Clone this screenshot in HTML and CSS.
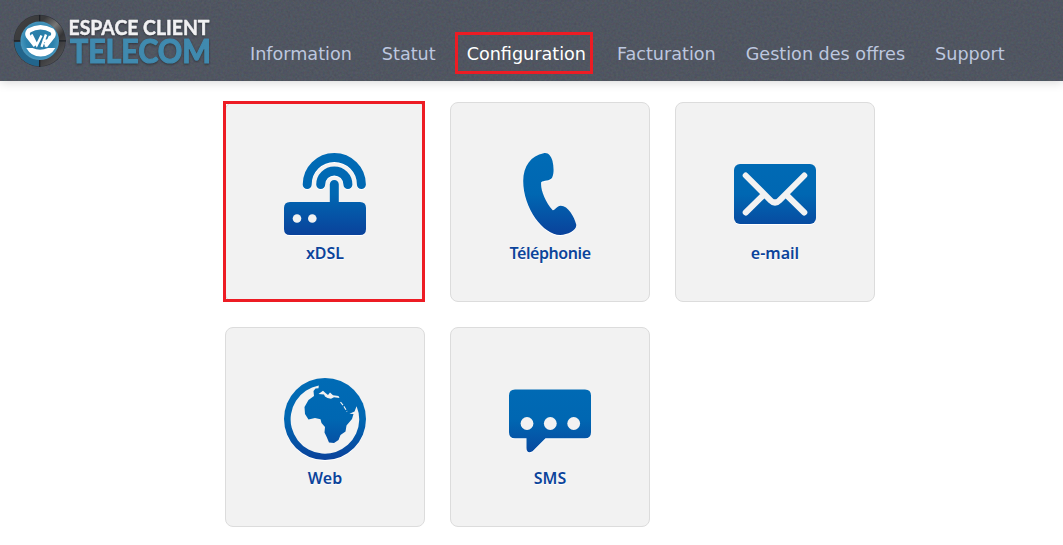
FILE: index.html
```html
<!DOCTYPE html>
<html lang="fr">
<head>
<meta charset="utf-8">
<title>Espace Client Telecom</title>
<link rel="stylesheet" href="styles.css">
</head>
<body>
<header class="header">
  <svg class="grain" aria-hidden="true">
    <filter id="noise" x="0" y="0" width="100%" height="100%" color-interpolation-filters="sRGB">
      <feTurbulence type="fractalNoise" baseFrequency=".43" numOctaves="4" seed="4"/>
      <feColorMatrix values="1 0 0 0 0  0 1 0 0 0  0 0 1 0 0  0 0 0 0 .08"/>
    </filter>
    <rect width="100%" height="100%" filter="url(#noise)"/>
  </svg>
  <a class="logo" href="#">
    <svg width="200" height="58" viewBox="0 0 200 58" role="img" aria-label="Espace Client Telecom">
      <defs>
        <linearGradient id="steel" x1="0" y1="0" x2="1" y2="1">
          <stop offset="0" stop-color="#424242"/><stop offset=".3" stop-color="#393a3c"/><stop offset=".5" stop-color="#777"/><stop offset=".68" stop-color="#353537"/><stop offset="1" stop-color="#5a5a5c"/>
        </linearGradient>
        <radialGradient id="disc"><stop offset="0" stop-color="#2679a4"/><stop offset=".7" stop-color="#2c82ad"/><stop offset="1" stop-color="#4796bd"/></radialGradient>
      </defs>
      <circle cx="27.700" cy="28.800" r="26" fill="#30343b"/>
      <circle cx="27.700" cy="28.800" r="22.300" fill="none" stroke="url(#steel)" stroke-width="6.200"/>
      <path d="M5.400 30A22.300 22.300 0 0 0 27 51.100" fill="none" stroke="#22658c" stroke-width="6.200"/>
      <path d="M27.700 3v7M27.700 48v7M2 28.800h7M47 28.800h7" stroke="#1c2026" stroke-width="1.200"/>
      <circle cx="27.700" cy="28.800" r="19.300" fill="url(#disc)"/>
      <path d="M23.500 33.500L16 24Q14.500 21.500 17 18.500Q28.500 12 40 18.500Q42.500 21.500 41 24L33.500 33.500" fill="none" stroke="#fff" stroke-width="4.600" stroke-linejoin="round"/>
      <path d="M19.500 22.500L24.800 33L29.500 23.500M29.500 34.800L34 22.500M30.500 28.800H36.500M33.500 34.800L38 24" fill="none" stroke="#fff" stroke-width="2.400"/>
      <path d="M14.300 36H20.500Q28 39.300 36 36H43.300Q38.500 44.500 28.700 44.500T14.300 36Z" fill="#fff"/>
      <g class="wordmark">
        <text class="word-top" x="56.500" y="23" textLength="141" lengthAdjust="spacingAndGlyphs">ESPACE CLIENT</text>
        <text class="word-bottom" x="58" y="51" textLength="141" lengthAdjust="spacingAndGlyphs">TELECOM</text>
      </g>
    </svg>
  </a>
  <nav class="nav">
    <a class="nav-link" href="#">Information</a>
    <a class="nav-link" href="#">Statut</a>
    <a class="nav-link active" href="#">Configuration</a>
    <a class="nav-link" href="#">Facturation</a>
    <a class="nav-link" href="#">Gestion des offres</a>
    <a class="nav-link" href="#">Support</a>
  </nav>
</header>
<main class="grid">
  <a class="card selected" href="#">
    <svg class="icon" viewBox="0 0 82 82">
      <defs><linearGradient id="blue" gradientUnits="userSpaceOnUse" x1="0" y1="0" x2="0" y2="82"><stop offset="0" stop-color="#006bb5"/><stop offset=".5" stop-color="#0067b2"/><stop offset="1" stop-color="#0a429b"/></linearGradient></defs>
      <path d="M23.200 31.500A27.100 27.100 0 0 1 77.400 31.500M36.700 31.500A13.600 13.600 0 0 1 63.900 31.500M50.300 31.500V52" fill="none" stroke="url(#blue)" stroke-width="9" stroke-linecap="round"/>
      <path d="M6 49H76Q82 49 82 55V76Q82 82 76 82H6Q0 82 0 76V55Q0 49 6 49Z" fill="url(#blue)"/>
      <circle class="hole" cx="13" cy="65.500" r="4.300"/><circle class="hole" cx="28.300" cy="65.500" r="4.300"/>
    </svg>
    <span class="label">xDSL</span>
  </a>
  <a class="card" href="#">
    <svg class="icon" viewBox="0 0 82 82">
      <path d="M20.500 .2C25 -.8 27.800 3 29.300 8C30.600 14 31 20 29 24.500C27 28.500 20 27 18 29.300C17 36 22 49 29.500 57.200C32 57.500 33.500 53.200 37.500 52.800C45 52.800 51 64 53 71.500C54 77 45 82 37 82C20 82 0 55 0 28C0 13 8 2.500 20.500 .2Z" transform="translate(14.200)" fill="url(#blue)"/>
    </svg>
    <span class="label tight">Téléphonie</span>
  </a>
  <a class="card" href="#">
    <svg class="icon" viewBox="0 0 82 82">
      <rect y="11" width="82" height="60" rx="6" fill="url(#blue)"/>
      <path class="cut" d="M11.700 22.500L36.500 47.300Q41 51.800 45.500 47.300L70.300 22.500M11.700 59.500L29 42.500M70.300 59.500L53 42.500"/>
    </svg>
    <span class="label">e-mail</span>
  </a>
  <a class="card" href="#">
    <svg class="icon" viewBox="0 0 82 82">
      <circle cx="41" cy="41" r="41" fill="url(#blue)"/>
      <path class="hole" d="M34.800 7.600A34.300 34.300 0 1 0 72.600 28.200L70.500 33.500L65.500 35.800L69.500 36L68 41L62.500 47.500L61.500 53.500L56.500 57L54.500 62L50 65L45 64.500L42.700 59L40.500 54.500L41 49L37.500 45L36.500 41.200L31 40L24.500 41.500L21 36L20.500 29L24.500 22L30 18L29.500 13L31.500 10.500L34.500 10.300Z"/>
      <path class="hole" d="M34.500 16L39 12.800L41.500 15L44 17L46 14.500L49 17.200L54.500 18L55.500 20L50 19.300L47 20.800L43.500 20L41 18.500L40 16.500Z"/>
      <path d="M56.500 24L60 28.500L63 33.500" fill="none" stroke="#f2f2f2" stroke-width="1.200" stroke-dasharray="4 1.500"/>
    </svg>
    <span class="label">Web</span>
  </a>
  <a class="card" href="#">
    <svg class="icon" viewBox="0 0 82 82">
      <path d="M6 11.500H76Q82 11.500 82 17.500V54.300Q82 60.300 76 60.300H36.500L23.500 73.300Q17.500 76 17.500 70V60.300H6Q0 60.300 0 54.300V17.500Q0 11.500 6 11.500Z" fill="url(#blue)"/>
      <circle class="hole" cx="18" cy="45.500" r="6.400"/><circle class="hole" cx="41.300" cy="45.500" r="6.400"/><circle class="hole" cx="64.700" cy="45.500" r="6.400"/>
    </svg>
    <span class="label">SMS</span>
  </a>
</main>
</body>
</html>
```
FILE: styles.css
```css
body { margin: 0; background: #fff; }
a { text-decoration: none; }
.header {
  position: relative;
  display: flex;
  height: 81px;
  background: #4c525e;
  box-shadow: 0 1px 10px rgba(0, 0, 0, .17);
}
.grain { position: absolute; inset: 0; width: 100%; height: 100%; }
.logo { position: relative; width: 250px; padding: 12px 0 0 12px; box-sizing: border-box; }
.logo svg { display: block; overflow: visible; }
.wordmark { filter: drop-shadow(0 1px 1px rgba(0, 0, 0, .4)); font-family: Lato, sans-serif; font-weight: 700; }
.word-top { font-size: 21.5px; fill: #f1f1f3; stroke: #f1f1f3; stroke-width: .5px; stroke-linejoin: round; }
.word-bottom { font-size: 33px; fill: #408aaf; stroke: #408aaf; stroke-width: 1.2px; stroke-linejoin: round; }
.nav { position: relative; display: flex; align-items: flex-start; padding-top: 32px; gap: 30px; }
.nav-link {
  box-sizing: border-box;
  height: 42px;
  font: 17.6px/44px "DejaVu Sans", sans-serif;
  color: #bdc7df;
  white-space: nowrap;
}
.nav-link.active {
  margin: 0 -6px 0 -11px;
  padding: 0 4px 0 9px;
  border: 3px solid #ed1c24;
  line-height: 38px;
  color: #fff;
}
.grid {
  display: grid;
  grid-template-columns: repeat(3, 200px);
  grid-auto-rows: 200px;
  gap: 25px;
  padding: 21px 0 18px 225px;
}
.card {
  position: relative;
  box-sizing: border-box;
  display: flex;
  flex-direction: column;
  align-items: center;
  padding-top: 50px;
  border: 1px solid #dcdcdc;
  border-radius: 8px;
  background: #f2f2f2;
}
.card.selected::after {
  content: "";
  position: absolute;
  inset: -2px -1px -1px -3px;
  border: 3px solid #ed1c24;
}
.icon { width: 82px; height: 82px; overflow: visible; filter: drop-shadow(0 1px 0 #fff); }
.hole { fill: #f2f2f2; }
.cut { fill: none; stroke: #f2f2f2; stroke-width: 6px; stroke-linecap: round; stroke-linejoin: round; }
.label { margin-top: 6px; font: 600 16px/24px "Noto Sans", sans-serif; color: #0c449b; text-shadow: 0 1px 0 #fff; }
.tight { letter-spacing: -.42px; }
```
